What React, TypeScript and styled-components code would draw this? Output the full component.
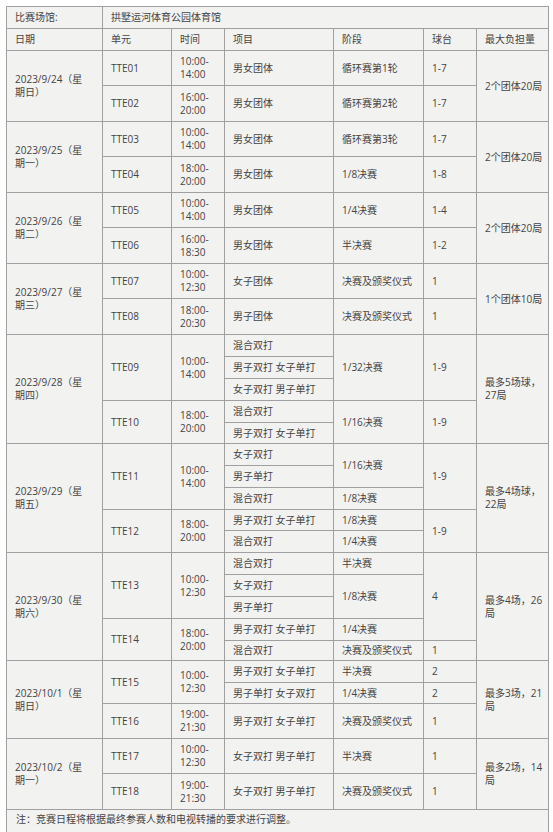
import React from 'react';
import styled, { createGlobalStyle } from 'styled-components';

const GlobalStyle = createGlobalStyle`
  body {
    margin: 0;
    background: #ffffff;
  }
`;

const Page = styled.div`
  padding: 6px 0 0 6px;
  font-family: "Open Sans", "Noto Sans CJK SC", sans-serif;
`;

const Sheet = styled.table`
  width: 542px;
  table-layout: fixed;
  border-collapse: collapse;
  background: #f2f2f1;
  color: #444444;
  font-size: 10px;
  line-height: 13px;
  border: 1px solid #a0a0a0;
`;

const Row = styled.tr<{ $h: number }>`
  height: ${(p) => p.$h}px;
`;

const HeadCell = styled.th`
  border: 1px solid #a0a0a0;
  padding: 0 8px;
  text-align: left;
  font-weight: normal;
  vertical-align: middle;
  white-space: nowrap;
`;

const Cell = styled.td`
  border: 1px solid #a0a0a0;
  padding: 0 8px;
  vertical-align: middle;
  white-space: nowrap;
  overflow: hidden;
`;

const NoteCell = styled.td`
  border: 1px solid #a0a0a0;
  padding: 3px 9px 0;
  height: 24px;
  vertical-align: top;
  white-space: nowrap;
`;

type CellDef = string | { t: string | string[]; r?: number; c?: number };

const widths = [96, 69, 53, 109, 90, 53, 72];

const t = (a: string, b: string) => ({ t: [a, b] });
const span = (text: string | string[], r: number) => ({ t: text, r });

const rows: { h: number; cells: CellDef[] }[] = [
  { h: 35, cells: [span(['2023/9/24（星', '期日）'], 2), 'TTE01', t('10:00-', '14:00'), '男女团体', '循环赛第1轮', '1-7', span('2个团体20局', 2)] },
  { h: 36, cells: ['TTE02', t('16:00-', '20:00'), '男女团体', '循环赛第2轮', '1-7'] },
  { h: 35, cells: [span(['2023/9/25（星', '期一）'], 2), 'TTE03', t('10:00-', '14:00'), '男女团体', '循环赛第3轮', '1-7', span('2个团体20局', 2)] },
  { h: 36, cells: ['TTE04', t('18:00-', '20:00'), '男女团体', '1/8决赛', '1-8'] },
  { h: 35, cells: [span(['2023/9/26（星', '期二）'], 2), 'TTE05', t('10:00-', '14:00'), '男女团体', '1/4决赛', '1-4', span('2个团体20局', 2)] },
  { h: 36, cells: ['TTE06', t('16:00-', '18:30'), '男女团体', '半决赛', '1-2'] },
  { h: 35, cells: [span(['2023/9/27（星', '期三）'], 2), 'TTE07', t('10:00-', '12:30'), '女子团体', '决赛及颁奖仪式', '1', span('1个团体10局', 2)] },
  { h: 36, cells: ['TTE08', t('18:00-', '20:30'), '男子团体', '决赛及颁奖仪式', '1'] },

  { h: 22, cells: [span(['2023/9/28（星', '期四）'], 5), span('TTE09', 3), span(['10:00-', '14:00'], 3), '混合双打', span('1/32决赛', 3), span('1-9', 3), span(['最多5场球，', '27局'], 5)] },
  { h: 22, cells: ['男子双打 女子单打'] },
  { h: 22, cells: ['女子双打 男子单打'] },
  { h: 22, cells: [span('TTE10', 2), span(['18:00-', '20:00'], 2), '混合双打', span('1/16决赛', 2), span('1-9', 2)] },
  { h: 21, cells: ['男子双打 女子单打'] },

  { h: 22, cells: [span(['2023/9/29（星', '期五）'], 5), span('TTE11', 3), span(['10:00-', '14:00'], 3), '女子双打', span('1/16决赛', 2), span('1-9', 3), span(['最多4场球，', '22局'], 5)] },
  { h: 22, cells: ['男子单打'] },
  { h: 22, cells: ['混合双打', '1/8决赛'] },
  { h: 21, cells: [span('TTE12', 2), span(['18:00-', '20:00'], 2), '男子双打 女子单打', '1/8决赛', span('1-9', 2)] },
  { h: 22, cells: ['混合双打', '1/4决赛'] },

  { h: 22, cells: [span(['2023/9/30（星', '期六）'], 5), span('TTE13', 3), span(['10:00-', '12:30'], 3), '混合双打', '半决赛', span('4', 4), span(['最多4场，26', '局'], 5)] },
  { h: 22, cells: ['女子双打', span('1/8决赛', 2)] },
  { h: 22, cells: ['男子单打'] },
  { h: 22, cells: [span('TTE14', 2), span(['18:00-', '20:00'], 2), '男子双打 女子单打', '1/4决赛'] },
  { h: 20, cells: ['混合双打', '决赛及颁奖仪式', '1'] },

  { h: 22, cells: [span(['2023/10/1（星', '期日）'], 3), span('TTE15', 2), span(['10:00-', '12:30'], 2), '男子双打 女子单打', '半决赛', '2', span(['最多3场，21', '局'], 3)] },
  { h: 21, cells: ['男子单打 女子双打', '1/4决赛', '2'] },
  { h: 35, cells: ['TTE16', t('19:00-', '21:30'), '男子双打 女子单打', '决赛及颁奖仪式', '1'] },

  { h: 35, cells: [span(['2023/10/2（星', '期一）'], 2), 'TTE17', t('10:00-', '12:30'), '女子双打 男子单打', '半决赛', '1', span(['最多2场，14', '局'], 2)] },
  { h: 36, cells: ['TTE18', t('19:00-', '21:30'), '女子双打 男子单打', '决赛及颁奖仪式', '1'] },
];

const renderText = (text: string | string[]) =>
  Array.isArray(text)
    ? text.map((line, i) => (
        <React.Fragment key={i}>
          {i > 0 && <br />}
          {line}
        </React.Fragment>
      ))
    : text;

const headers = ['日期', '单元', '时间', '项目', '阶段', '球台', '最大负担量'];

const App = () => {
  return (
    <Page>
      <GlobalStyle />
      <Sheet>
        <colgroup>
          {widths.map((w, i) => (
            <col key={i} style={{ width: w }} />
          ))}
        </colgroup>
        <tbody>
          <Row $h={22}>
            <Cell>比赛场馆:</Cell>
            <Cell colSpan={6}>拱墅运河体育公园体育馆</Cell>
          </Row>
          <Row $h={22}>
            {headers.map((h) => (
              <HeadCell key={h}>{h}</HeadCell>
            ))}
          </Row>
          {rows.map((row, ri) => (
            <Row key={ri} $h={row.h}>
              {row.cells.map((cell, ci) =>
                typeof cell === 'string' ? (
                  <Cell key={ci}>{cell}</Cell>
                ) : (
                  <Cell key={ci} rowSpan={cell.r} colSpan={cell.c}>
                    {renderText(cell.t)}
                  </Cell>
                )
              )}
            </Row>
          ))}
          <tr>
            <NoteCell colSpan={7}>注：竞赛日程将根据最终参赛人数和电视转播的要求进行调整。</NoteCell>
          </tr>
        </tbody>
      </Sheet>
    </Page>
  );
};

export default App;
